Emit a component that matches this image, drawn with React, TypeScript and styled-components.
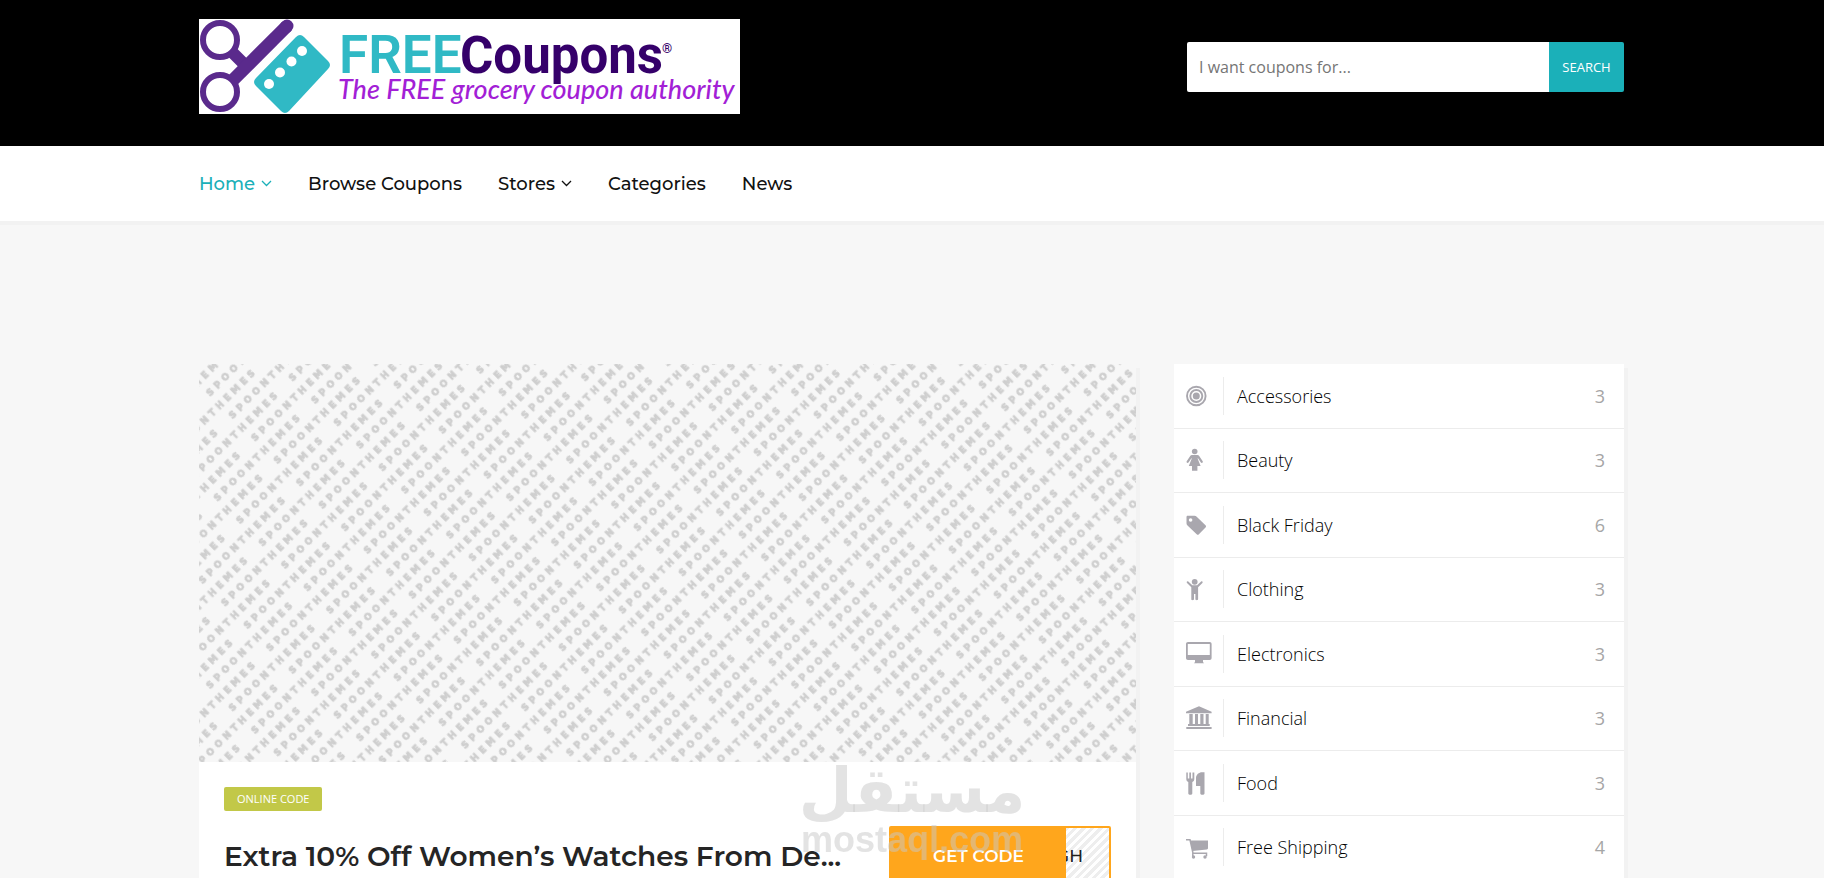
import React from "react";
import styled, { createGlobalStyle, css } from "styled-components";

const headingFont = css`
  font-family: Montserrat, Inter, "Open Sans", sans-serif;
`;

const GlobalStyle = createGlobalStyle`
  *, *::before, *::after { box-sizing: border-box; }
  body {
    margin: 0;
    background: #f7f7f7;
    color: #202020;
    font-family: "Open Sans", "Noto Sans", sans-serif;
    font-size: 16px;
  }
`;

const Container = styled.div`
  width: 100%;
  max-width: 1458px;
  margin: 0 auto;
  padding: 0 17px 0 16px;
`;

const Header = styled.header`
  background: #000;
  padding: 19px 0 32px;
`;

const HeaderInner = styled(Container)`
  display: flex;
  align-items: flex-start;
  justify-content: space-between;
  gap: 32px;
`;

const LogoLink = styled.a`
  display: block;
  svg {
    display: block;
    width: 541px;
    max-width: 100%;
    height: 95px;
    background: #fff;
  }
`;

const SearchForm = styled.form`
  display: flex;
  flex: 0 1 437px;
  height: 50px;
  margin-top: 23px;
  border-radius: 2px;
  overflow: hidden;
`;

const SearchInput = styled.input`
  flex: 1;
  min-width: 0;
  border: 0;
  padding: 0 12px;
  background: #fff;
  font: inherit;
  color: #202020;
  &::placeholder {
    color: #757575;
    opacity: 1;
  }
`;

const SearchButton = styled.button`
  flex: 0 0 75px;
  border: 0;
  padding: 0;
  background: #1bb0b9;
  color: #fff;
  font: inherit;
  font-size: 13px;
  font-weight: 500;
`;

const NavBar = styled.nav`
  background: #fff;
  box-shadow: 0 4px 0 rgba(0, 0, 0, 0.02);
`;

const NavList = styled.ul`
  display: flex;
  gap: 36px;
  height: 75px;
  margin: 0;
  padding: 0;
  align-items: center;
  list-style: none;
`;

const NavLink = styled.a<{ $active?: boolean }>`
  ${headingFont}
  display: flex;
  align-items: center;
  gap: 6px;
  color: ${(p) => (p.$active ? "#1bb0b9" : "#111")};
  font-size: 18px;
  font-weight: 500;
  text-decoration: none;
  white-space: nowrap;
`;

const Columns = styled(Container)`
  display: grid;
  grid-template-columns: minmax(0, 937fr) minmax(0, 450fr);
  gap: 38px;
  align-items: start;
  padding-top: 143px;
`;

const Card = styled.article`
  background: #fff;
  box-shadow: 4px 4px 0 rgba(0, 0, 0, 0.02);
`;

const CardImage = styled.svg`
  display: block;
  width: 100%;
  height: 398px;
  background: #f7f7f7;
`;

const CardBody = styled.div`
  padding: 25px;
`;

const Tag = styled.span`
  display: block;
  width: fit-content;
  padding: 0 13px;
  border-radius: 2px;
  background: #c2c848;
  color: #fff;
  font-size: 11px;
  line-height: 24px;
`;

const OfferRow = styled.div`
  display: flex;
  align-items: center;
  justify-content: space-between;
  gap: 24px;
  margin-top: 15px;
`;

const OfferTitle = styled.h2`
  ${headingFont}
  margin: 0;
  min-width: 0;
  color: #252525;
  font-size: 28px;
  font-weight: 600;
  line-height: 40px;
  white-space: nowrap;
`;

const CodeButton = styled.button`
  ${headingFont}
  display: flex;
  flex: 0 0 222px;
  height: 60px;
  padding: 0;
  border: 2px solid #ffa61c;
  border-radius: 2px;
  overflow: hidden;
  background: repeating-linear-gradient(135deg, #fff 0 3px, #eee 3px 6px);
  color: #202020;
  font-size: 17px;
  font-weight: 500;
  line-height: 56px;
`;

const CodeCover = styled.span`
  flex: 0 0 175px;
  background: #ffa61c;
  color: #fff;
  font-weight: 600;
`;

const CodeTail = styled.span`
  flex: 1;
  display: flex;
  justify-content: flex-end;
  overflow: hidden;
  padding-right: 26px;
`;

const CategoryList = styled.ul`
  display: grid;
  grid-auto-rows: 1fr;
  min-height: 516px;
  margin: 0;
  padding: 0;
  list-style: none;
  background: #fff;
  box-shadow: 4px 4px 0 rgba(0, 0, 0, 0.02);
`;

const CategoryItem = styled.li`
  display: flex;
  border-bottom: 1px solid #ececec;
`;

const CategoryLink = styled.a`
  display: flex;
  flex: 1;
  align-items: center;
  padding: 0 19px 0 12px;
  color: #000;
  font-size: 18px;
  font-weight: 300;
  text-decoration: none;
`;

const IconCell = styled.span`
  display: flex;
  align-items: center;
  width: 38px;
  height: 38px;
  margin-right: 13px;
  border-right: 1px solid #ececec;
  color: #a9a7ae;
`;

const CategoryCount = styled.span`
  margin-left: auto;
  color: #a6a6a6;
  font-weight: 400;
`;

const Watermark = styled.svg`
  position: fixed;
  bottom: 0;
  left: 50%;
  width: 280px;
  height: 136px;
  margin-left: -140px;
  pointer-events: none;
`;

const Logo = () => (
  <svg viewBox="0 0 541 95" role="img" aria-label="Free Coupons">
    <g fill="none" stroke="#5a2a8c">
      <circle cx="21" cy="21" r="17" strokeWidth="6" />
      <circle cx="21" cy="73" r="17" strokeWidth="6" />
      <path d="M33 33 46 46" strokeWidth="12" />
      <path d="M34 61 88 7" strokeWidth="13" />
      <path d="M87 8 88 7" strokeWidth="13" strokeLinecap="round" />
    </g>
    <path
      d="M97 18q4-4 8 0l24 24q4 4 0 8L90 92q-4 4-8 0L57 67q-4-4 0-8z"
      fill="#30b9c5"
    />
    <g fill="#fff">
      <circle cx="103" cy="32" r="5" />
      <circle cx="92.500" cy="42.500" r="5" />
      <circle cx="81" cy="53.500" r="5" />
      <circle cx="70" cy="65" r="5" />
    </g>
    <text x="140" y="54" fill="#30b9c5" fontFamily="Roboto, sans-serif" fontSize="53" fontWeight="600">
      FREE
    </text>
    <text x="261" y="54" fill="#35006a" fontFamily="Roboto, sans-serif" fontSize="51" fontWeight="700">
      Coupons
    </text>
    <text x="463" y="34" fill="#35006a" fontFamily="Roboto, sans-serif" fontSize="13" fontWeight="700">
      ®
    </text>
    <text x="139" y="80" fill="#a31fd6" fontFamily="Lato, sans-serif" fontSize="27" fontStyle="italic" fontWeight="500">
      The FREE grocery coupon authority
    </text>
  </svg>
);

const Chevron = () => (
  <svg width="11" height="7" viewBox="0 0 11 7" aria-hidden="true">
    <path d="M1 1l4.500 4.500L10 1" fill="none" stroke="currentColor" strokeWidth="1.300" />
  </svg>
);

const icons: Record<string, React.ReactNode> = {
  target: (
    <>
      <circle cx="10.300" cy="12" r="9.300" fill="none" stroke="currentColor" strokeWidth="1.900" />
      <circle cx="10.300" cy="12" r="6" fill="none" stroke="currentColor" strokeWidth="1.900" />
      <circle cx="10.300" cy="12" r="3.500" />
    </>
  ),
  female: (
    <>
      <circle cx="8.700" cy="3.500" r="2.800" />
      <path d="M6 7h5.400c.8 0 1.300.3 1.800 1l3.500 5.300c.7 1.200-1 2.300-1.800 1.200L12 10.300l-.4.300 3 7.400h-3.200v4.700H6V18H2.800l3-7.400-.4-.3-2.900 4.200C1.700 15.600 0 14.500.7 13.300L4.200 8c.5-.7 1-1 1.800-1z" />
    </>
  ),
  tag: (
    <path
      fillRule="evenodd"
      d="M1.500 2.800h7c.8 0 1.600.4 2.200 1l8.800 8.500c.7.7.7 1.500 0 2.200l-6.600 6.700c-.7.700-1.500.7-2.200 0L1.500 12.500c-.7-.7-1-1.400-1-2.300v-6c0-.8.3-1.400 1-1.400zM4.600 5.200a1.800 1.800 0 1 0 0 3.600 1.800 1.800 0 0 0 0-3.600z"
    />
  ),
  child: (
    <>
      <circle cx="8.700" cy="4.800" r="2.900" />
      <path d="M2.300 4.500l4 3.700h4.800l4-3.700c1-.8 2.200.5 1.300 1.400l-4.300 4.300V22c0 1.600-2.700 1.600-2.700 0v-5h-1.400v5c0 1.600-2.700 1.600-2.700 0V10.200L1 5.900c-.9-.9.300-2.200 1.300-1.400z" />
    </>
  ),
  desktop: (
    <path
      fillRule="evenodd"
      d="M2 0h21.600c1.300 0 2 .8 2 2v14c0 1.200-.7 2-2 2H17v2l1 1.300H8L9 20v-2H2c-1.200 0-2-.8-2-2V2C0 .8.800 0 2 0zm-.2 2v11h22V2z"
    />
  ),
  bank: (
    <path d="M13 .3 25.600 5.700v1.500H0V5.700zM3.300 8h3.400v10h2.300V8h3v10h2.300V8h3.200v10h2.200V8h3v10h1v2H2v-2h1.300zM.3 21h25.300v2H.3z" />
  ),
  cutlery: (
    <path d="M.3 1.500h1.500v6h1.500v-6h1.700v6h1.500v-6H8.300V8c0 1.500-.8 2.500-2 3v11.500c0 1.800-4 1.800-4 0V11c-1.200-.5-2-1.500-2-3zM18.500 1.200v21.300c0 1.800-4.200 1.800-4.200 0V15H10V7c0-3.500 3-5.800 6-5.800z" />
  ),
  cart: (
    <>
      <path d="M4 5.500h18v7.500c0 .8-.4 1.200-1.200 1.400L6.500 16z" />
      <path d="M0 4.800h4l3 13.400h13.500v3M6.800 18v3" fill="none" stroke="currentColor" strokeWidth="1.500" />
      <circle cx="7.500" cy="22" r="1.700" />
      <circle cx="19" cy="22" r="1.700" />
    </>
  ),
};

const categories = [
  { name: "Accessories", count: 3, icon: "target" },
  { name: "Beauty", count: 3, icon: "female" },
  { name: "Black Friday", count: 6, icon: "tag" },
  { name: "Clothing", count: 3, icon: "child" },
  { name: "Electronics", count: 3, icon: "desktop" },
  { name: "Financial", count: 3, icon: "bank" },
  { name: "Food", count: 3, icon: "cutlery" },
  { name: "Free Shipping", count: 4, icon: "cart" },
];

const navItems = [
  { label: "Home", menu: true, active: true },
  { label: "Browse Coupons" },
  { label: "Stores", menu: true },
  { label: "Categories" },
  { label: "News" },
];

const Placeholder = () => (
  <CardImage role="img" aria-label="Spoonthemes placeholder">
    <defs>
      {/* Two staggered lines of the theme name, repeated along the diagonal */}
      <pattern
        id="words"
        width="137.900"
        height="31.820"
        patternUnits="userSpaceOnUse"
        patternTransform="translate(2 25) rotate(-45)"
      >
        <g
          fill="#cecece"
          stroke="#cecece"
          strokeWidth="0.800"
          fontFamily="DejaVu Sans, sans-serif"
          fontSize="9"
          fontWeight="700"
          letterSpacing="4"
        >
          <text x="1" y="12">SPOONTHEMES</text>
          <text x="70" y="28">SPOONTHEMES</text>
          <text x="-68" y="28">SPOONTHEMES</text>
        </g>
      </pattern>
    </defs>
    <rect width="100%" height="100%" fill="url(#words)" />
  </CardImage>
);

export default function App() {
  return (
    <>
      <GlobalStyle />
      <Header>
        <HeaderInner>
          <LogoLink href="#">
            <Logo />
          </LogoLink>
          <SearchForm role="search">
            <SearchInput type="text" aria-label="Search coupons" placeholder="I want coupons for..." />
            <SearchButton type="button">SEARCH</SearchButton>
          </SearchForm>
        </HeaderInner>
      </Header>
      <NavBar>
        <Container>
          <NavList>
            {navItems.map((item) => (
              <li key={item.label}>
                <NavLink href="#" $active={item.active}>
                  {item.label}
                  {item.menu && <Chevron />}
                </NavLink>
              </li>
            ))}
          </NavList>
        </Container>
      </NavBar>
      <Columns as="main">
        <Card>
          <Placeholder />
          <CardBody>
            <Tag>ONLINE CODE</Tag>
            <OfferRow>
              <OfferTitle>Extra 10% Off Women’s Watches From De...</OfferTitle>
              <CodeButton type="button">
                <CodeCover>GET CODE</CodeCover>
                <CodeTail>GH</CodeTail>
              </CodeButton>
            </OfferRow>
          </CardBody>
        </Card>
        <CategoryList>
          {categories.map((category) => (
            <CategoryItem key={category.name}>
              <CategoryLink href="#">
                <IconCell>
                  <svg width="26" height="24" viewBox="0 0 26 24" fill="currentColor" aria-hidden="true">
                    {icons[category.icon]}
                  </svg>
                </IconCell>
                {category.name}
                <CategoryCount>{category.count}</CategoryCount>
              </CategoryLink>
            </CategoryItem>
          ))}
        </CategoryList>
      </Columns>
      <Watermark viewBox="0 0 280 136" aria-hidden="true">
        <g fill="#c8c8c8" fillOpacity="0.5" textAnchor="middle" fontWeight="700">
          <text x="140" y="70" fontFamily="DejaVu Sans, sans-serif" fontSize="62">
            مستقل
          </text>
          <text x="140" y="110" fontFamily="Liberation Sans, sans-serif" fontSize="36">
            mostaql.com
          </text>
        </g>
      </Watermark>
    </>
  );
}
